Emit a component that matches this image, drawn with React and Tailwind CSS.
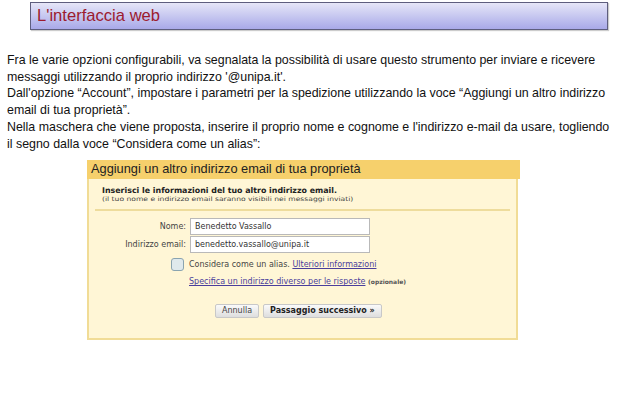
export default function App() {
  return (
    <div className="w-[635px] h-[396px] bg-white overflow-hidden" style={{ fontFamily: '"Liberation Sans", Arial, sans-serif' }}>
      <div className="pt-[2px] pl-[30px]">
        <div className="w-[578px] h-[28px] border border-[#5e5e7e] bg-gradient-to-b from-[#e6e6f7] to-[#a9a9e8] shadow-[1px_1px_1px_rgba(0,0,0,0.2)] flex items-center pl-[6px]">
          <span className="text-[16.6px] text-[#9c1b2e] leading-none">L'interfaccia web</span>
        </div>
      </div>
      <div className="mt-[22px] pl-[7px] pr-[20px] text-[12.4px] leading-[16.7px] text-[#111]">
        <p>Fra le varie opzioni configurabili, va segnalata la possibilità di usare questo strumento per inviare e ricevere messaggi utilizzando il proprio indirizzo '@unipa.it'.</p>
        <p>Dall'opzione “Account”, impostare i parametri per la spedizione utilizzando la voce “Aggiungi un altro indirizzo email di tua proprietà”.</p>
        <p>Nella maschera che viene proposta, inserire il proprio nome e cognome e l'indirizzo e-mail da usare, togliendo il segno dalla voce “Considera come un alias”:</p>
      </div>
      <div className="ml-[87px] mt-[8px] w-[433px]">
        <div className="h-[19px] bg-[#f6d06c] flex items-center pl-[4px] text-[12.8px] text-[#222] leading-none">
          Aggiungi un altro indirizzo email di tua proprietà
        </div>
        <div className="h-[161px] bg-[#fff6d6] border-2 border-t-0 border-[#f1dc96] mr-[2px] px-[6px] pt-[6px]">
          <div className="pl-[7px]" style={{ fontFamily: '"DejaVu Sans", Verdana, sans-serif' }}>
            <div className="text-[7.9px] font-bold text-[#222] leading-[11px]">Inserisci le informazioni del tuo altro indirizzo email.</div>
            <div className="text-[7.6px] scale-y-[0.8] origin-top-left text-[#444] leading-[8px]">(il tuo nome e indirizzo email saranno visibili nei messaggi inviati)</div>
          </div>
          <div className="mt-[5px] h-[2px] bg-[#eedc9c]" />
          <div className="text-[8px] text-[#444]" style={{ fontFamily: '"DejaVu Sans", Verdana, sans-serif' }}>
            <div className="mt-[7px] flex items-center">
              <div className="w-[95px] text-right pr-[4px]">Nome:</div>
              <div className="w-[180px] h-[17px] bg-white border border-[#b9b9b9] flex items-center pl-[4px] text-[#333]">Benedetto Vassallo</div>
            </div>
            <div className="mt-[1px] flex items-center">
              <div className="w-[95px] text-right pr-[4px]">Indirizzo email:</div>
              <div className="w-[180px] h-[17px] bg-white border border-[#b9b9b9] flex items-center pl-[4px] text-[#333]">benedetto.vassallo@unipa.it</div>
            </div>
            <div className="mt-[5px] flex items-center pl-[76px]">
              <div className="w-[13px] h-[13px] rounded-[3px] border border-[#8aa4b0] bg-[#dfe9ec]" />
              <span className="ml-[5px]">Considera come un alias. <span className="underline text-[#4a3e9c]">Ulteriori informazioni</span></span>
            </div>
            <div className="mt-[5px] pl-[94px]">
              <span className="underline text-[#4a3e9c]">Specifica un indirizzo diverso per le risposte</span>{' '}
              <span className="text-[6px] font-bold text-[#555]">(opzionale)</span>
            </div>
            <div className="mt-[16px] flex items-center pl-[120px] gap-[4px]">
              <div className="h-[14px] px-[6px] flex items-center rounded-[2px] border border-[#c8c8c8] bg-gradient-to-b from-[#fafafa] to-[#dedede] text-[#444]">Annulla</div>
              <div className="h-[14px] px-[6px] flex items-center rounded-[2px] border border-[#c8c8c8] bg-gradient-to-b from-[#fafafa] to-[#dedede] font-bold text-[#222]">Passaggio successivo »</div>
            </div>
          </div>
        </div>
      </div>
    </div>
  );
}
